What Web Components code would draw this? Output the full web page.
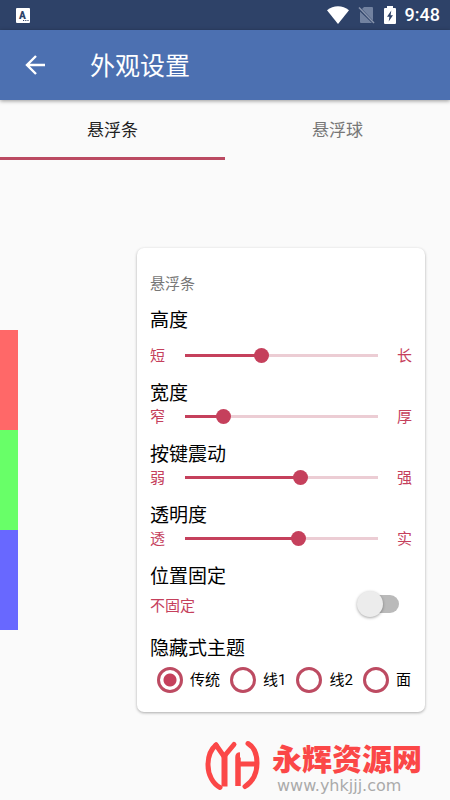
<!DOCTYPE html>
<html lang="zh-CN">
<head>
<meta charset="utf-8">
<meta name="viewport" content="width=device-width, initial-scale=1">
<title>外观设置</title>
<style>
  :root {
    --accent: #c5405c;
    --accent-light: #eccdd4;
    --primary: #4c70b1;
    --primary-dark: #2e4268;
  }
  body {
    margin: 0;
    background: #fafafa;
    color: #000;
    font-family: Roboto, "Noto Sans CJK SC", sans-serif;
    font-size: 15px;
  }
</style>
</head>
<body>
<settings-screen></settings-screen>

<script>
const define = (name, html, setup) => {
  const template = document.createElement('template');
  template.innerHTML = html;
  customElements.define(name, class extends HTMLElement {
    constructor() {
      super();
      this.attachShadow({ mode: 'open' }).append(template.content.cloneNode(true));
    }
    connectedCallback() {
      if (setup && !this.ready) {
        this.ready = true;
        setup(this, s => this.shadowRoot.querySelector(s));
      }
    }
  });
};

define('status-bar', `
  <style>
    :host { display: flex; align-items: center; justify-content: space-between; height: 30px; padding: 0 10px 0 16px; background: var(--primary-dark); color: #fff; }
    div { display: flex; align-items: center; gap: 9px; }
    span { font-size: 18px; line-height: 32px; font-weight: 500; }
    svg { display: block; }
  </style>
  <svg width="14" height="15" viewBox="0 0 14 15" aria-hidden="true">
    <rect width="14" height="15" rx="1" fill="#fff"/>
    <text x="6.5" y="11" text-anchor="middle" font-family="Roboto, sans-serif" font-weight="900" font-size="10" fill="#2e4268">A</text>
    <path d="M7 12.5h1.2M9.2 12.5h1.2M11.4 12.5h1.2" stroke="#2e4268"/>
  </svg>
  <div>
    <svg width="22" height="18" viewBox="0 0 22 18" aria-hidden="true"><path d="M0 4.3C6.400 -1.200 15.600 -1.200 22 4.300L11 18z" fill="#fff"/></svg>
    <svg width="17" height="18" viewBox="0 0 17 18" aria-hidden="true">
      <path d="M6 1h8q1 0 1 1v12.500L4 3zM2 5.500l12 11.500H3q-1 0-1-1z" fill="#7282a0"/>
      <path d="M1 1.500l15 15.500" stroke="#8995ad" stroke-width="1.500"/>
    </svg>
    <svg width="12" height="18" viewBox="0 0 12 18" aria-hidden="true">
      <path d="M3 0h6v2h2q1 0 1 1v14q0 1-1 1H1q-1 0-1-1V3q0-1 1-1h2z" fill="#fff"/>
      <path d="M7.300 4.500L3 10.700h2.400L4.700 15.500 9 9.200H6.600z" fill="#2e4268"/>
    </svg>
    <span>9:48</span>
  </div>`);

define('app-bar', `
  <style>
    :host { display: flex; align-items: center; gap: 40px; height: 70px; padding: 0 20px; background: var(--primary); color: #fff; box-shadow: 0 1px 4px rgba(0,0,0,.4); }
    button { display: grid; place-items: center; width: 30px; height: 48px; padding: 0; border: 0; background: none; color: inherit; }
    h1 { margin: 0; padding-top: 4px; font-size: 25px; line-height: 36px; font-weight: 400; }
  </style>
  <button type="button" aria-label="返回"><svg width="20" height="20" viewBox="0 0 20 20" fill="none" stroke="#fff" stroke-width="2.400"><path d="M20 10H2M11 1L2 10l9 9"/></svg></button>
  <h1><slot></slot></h1>`);

define('tab-bar', `
  <style>
    :host { display: grid; grid-template-columns: 1fr 1fr; height: 60px; }
    button { padding: 3px 0 0; border: 0; border-bottom: 3px solid transparent; background: none; font: inherit; font-size: 17px; line-height: 24px; color: #777; }
    button[aria-selected="true"] { color: #212121; border-bottom-color: #bb4a62; }
  </style>
  <button type="button" role="tab" aria-selected="true">悬浮条</button>
  <button type="button" role="tab" aria-selected="false">悬浮球</button>`,
  host => {
    host.setAttribute('role', 'tablist');
    const tabs = host.shadowRoot.querySelectorAll('button');
    tabs.forEach(t => t.addEventListener('click', () =>
      tabs.forEach(o => o.setAttribute('aria-selected', o === t))));
  });

define('edge-bar', `
  <style>
    :host { display: grid; grid-auto-rows: 100px; width: 18px; }
    i:nth-of-type(1) { background: #ff6868; }
    i:nth-of-type(2) { background: #68ff68; }
    i:nth-of-type(3) { background: #6868ff; }
  </style>
  <i></i><i></i><i></i>`);

define('slider-setting', `
  <style>
    :host { display: block; padding-bottom: 14px; --gap: 0; --value: 0%; }
    label { display: block; font-size: 19px; line-height: 24px; }
    div { display: flex; align-items: flex-start; gap: 12px; height: 23px; padding-top: var(--gap); color: var(--accent); line-height: 23px; }
    :host([roomy]) { --gap: 12px; }
    input {
      flex: 1; min-width: 0; height: 21px; margin: 0; appearance: none;
      background: linear-gradient(to right, var(--accent) var(--value), var(--accent-light) var(--value)) center / calc(100% - 15px) 3px no-repeat;
    }
    input::-webkit-slider-thumb { appearance: none; width: 15px; height: 15px; border-radius: 50%; background: var(--accent); }
  </style>
  <label for="range"></label>
  <div><span class="low"></span><input id="range" type="range" min="0" max="100"><span class="high"></span></div>`,
  (host, $) => {
    $('label').textContent = host.getAttribute('label');
    $('.low').textContent = host.getAttribute('low');
    $('.high').textContent = host.getAttribute('high');
    const input = $('input');
    input.value = host.getAttribute('value');
    const paint = () => input.style.setProperty('--value', input.value + '%');
    input.addEventListener('input', paint);
    paint();
  });

define('switch-setting', `
  <style>
    :host { display: block; }
    label { display: block; font-size: 19px; line-height: 24px; }
    div { display: flex; align-items: center; justify-content: space-between; height: 30px; padding-right: 13px; color: var(--accent); }
    input { appearance: none; display: flex; align-items: center; width: 42px; height: 26px; margin: 0; }
    input::before { content: ""; flex: none; width: 26px; height: 26px; border-radius: 50%; background: #ececec; box-shadow: 0 1px 3px rgba(0,0,0,.35); z-index: 1; }
    input::after { content: ""; flex: none; width: 36px; height: 18px; margin-left: -20px; border-radius: 9px; background: #bababa; }
    input:checked::before { order: 1; margin-left: -20px; background: var(--accent); }
    input:checked::after { margin-left: 0; background: var(--accent-light); }
  </style>
  <label for="switch">位置固定</label>
  <div><span>不固定</span><input id="switch" type="checkbox" role="switch"></div>`,
  (host, $) => $('input').addEventListener('change', e => {
    $('span').textContent = e.target.checked ? '固定' : '不固定';
  }));

define('theme-setting', `
  <style>
    fieldset { display: block; min-width: 0; margin: 0; padding: 0; border: 0; }
    legend { padding: 0 0 6px; font-size: 19px; line-height: 24px; }
    div { display: flex; gap: 10px; padding-left: 7px; }
    label { display: flex; align-items: center; gap: 7px; white-space: nowrap; line-height: 26px; }
    input { appearance: none; flex: none; width: 26px; height: 26px; margin: 0; border: 3px solid #bd4b62; border-radius: 50%; }
    input:checked { background: radial-gradient(circle, var(--accent) 6px, transparent 7px); }
  </style>
  <fieldset>
    <legend>隐藏式主题</legend>
    <div>
      <label><input type="radio" name="theme" checked>传统</label>
      <label><input type="radio" name="theme">线1</label>
      <label><input type="radio" name="theme">线2</label>
      <label><input type="radio" name="theme">面</label>
    </div>
  </fieldset>`);

define('settings-card', `
  <style>
    :host { display: block; box-sizing: border-box; padding: 24px 13px 19px; border-radius: 7px; background: #fff; box-shadow: 0 1px 3px rgba(0,0,0,.32); }
    h2 { margin: 0 0 13px; font-size: 15px; line-height: 24px; font-weight: 400; color: #777; }
  </style>
  <h2>悬浮条</h2>
  <slot></slot>`);

define('site-mark', `
  <style>
    :host { display: flex; justify-content: flex-end; gap: 10px; padding: 24px 28px 0 0; }
    svg { display: block; margin-top: 2px; }
    a { display: flex; flex-direction: column; text-decoration: none; }
    strong { font: 900 30px/42px "Noto Sans CJK SC", sans-serif; color: #fb4747; }
    span { padding-left: 5px; font: 16px/16px "DejaVu Sans", sans-serif; color: #aaa; }
  </style>
  <svg width="57" height="54" viewBox="0 0 57 54" fill="none" stroke="#fb4747" stroke-width="5" stroke-linecap="round" aria-hidden="true">
    <path d="M11 7C5 12 3 19 3 27C3 37 8 46 15 49.500"/>
    <path d="M11 7L19 18.500L29 6.500"/>
    <path d="M19.500 17V48.500" stroke-width="6" stroke-linecap="butt"/>
    <path d="M33 48V19q0-2 2-2" stroke-width="5.500" stroke-linecap="butt"/>
    <path d="M34 26H52" stroke-linecap="butt"/>
    <path d="M43 5.500C49 9 52 16 52 25C52 36 47 44 40 48.500"/>
  </svg>
  <a href="#"><strong>永辉资源网</strong><span>www.yhkjjj.com</span></a>`);

define('settings-screen', `
  <style>
    :host { display: block; }
    main { display: flex; align-items: flex-start; justify-content: space-between; padding-right: 25px; }
    edge-bar { margin-top: 170px; }
    settings-card { width: 64%; min-width: 288px; margin-top: 88px; }
    switch-setting { margin-bottom: 18px; }
  </style>
  <status-bar></status-bar>
  <app-bar>外观设置</app-bar>
  <tab-bar></tab-bar>
  <main>
    <edge-bar></edge-bar>
    <settings-card>
      <slider-setting roomy label="高度" low="短" high="长" value="40"></slider-setting>
      <slider-setting label="宽度" low="窄" high="厚" value="20"></slider-setting>
      <slider-setting label="按键震动" low="弱" high="强" value="60"></slider-setting>
      <slider-setting label="透明度" low="透" high="实" value="59"></slider-setting>
      <switch-setting></switch-setting>
      <theme-setting></theme-setting>
    </settings-card>
  </main>
  <site-mark></site-mark>`);
</script>
</body>
</html>
